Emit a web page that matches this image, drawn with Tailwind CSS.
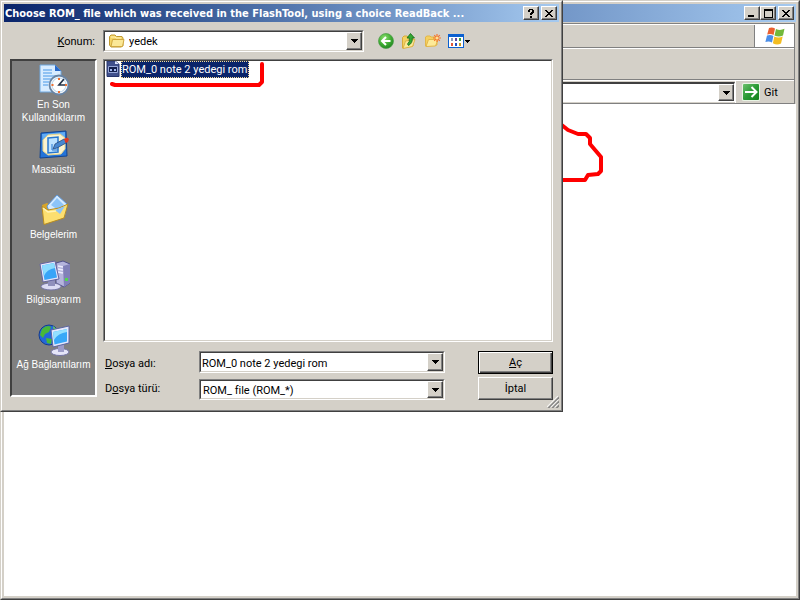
<!DOCTYPE html>
<html lang="tr">
<head>
<meta charset="utf-8">
<title>yedek</title>
<script src="https://cdn.jsdelivr.net/npm/@tailwindcss/browser@4"></script>
</head>
<body class="relative flex min-h-screen bg-[#d4d0c8] font-['Roboto',Tahoma,sans-serif] text-[11px] leading-[13px] text-black">

<!-- Browser window -->
<main class="flex flex-1 border-t border-l border-r border-b border-t-[#d4d0c8] border-l-[#d4d0c8] border-r-[#404040] border-b-[#404040]">
  <div class="flex flex-1 flex-col border border-t-white border-l-white border-r-[#808080] border-b-[#808080] bg-[#d4d0c8] p-[2px]">
    <header class="flex h-[18px] items-center justify-end bg-linear-to-r from-[#0a246a] to-[#a6caf0] pr-[2px]">
      <button aria-label="Simge durumuna küçült" class="flex h-[14px] w-4 items-end border border-t-white border-l-white border-r-[#404040] border-b-[#404040] bg-[#d4d0c8] pb-[2px] pl-[3px] shadow-[inset_-1px_-1px_#808080]"><svg width="6" height="2"><path d="M0 0h6v2H0z"/></svg></button>
      <button aria-label="Ekranı kapla" class="flex h-[14px] w-4 items-center justify-center border border-t-white border-l-white border-r-[#404040] border-b-[#404040] bg-[#d4d0c8] shadow-[inset_-1px_-1px_#808080]"><svg width="9" height="9" shape-rendering="crispEdges"><path d="M0 0h9v9H0zM1 2v6h7V2z" fill-rule="evenodd"/></svg></button>
      <button aria-label="Kapat" class="ml-[2px] flex h-[14px] w-4 items-center justify-center border border-t-white border-l-white border-r-[#404040] border-b-[#404040] bg-[#d4d0c8] shadow-[inset_-1px_-1px_#808080]"><svg width="8" height="7" shape-rendering="crispEdges"><path d="M0 0h2v1h1v1h2V1h1V0h2v1H7v1H6v1H5v1h1v1h1v1h1v1H6V6H5V5H3v1H2v1H0V6h1V5h1V4h1V3H2V2H1V1H0z"/></svg></button>
    </header>
    <div class="mt-px mr-px flex flex-col border-t border-r border-b border-[#808080]">
      <div class="flex h-6 border-t border-b border-t-white border-b-[#808080]">
        <div class="flex-1"></div>
        <div class="flex w-10 items-center justify-center border-l border-[#808080] bg-white">
          <svg width="20" height="18" viewBox="0 0 20 18" aria-hidden="true">
            <path d="M4 1Q7-.5 10 1.6L8.6 8Q5.500 6.200 2.200 7.600z" fill="#ea6030"/>
            <path d="M11 2Q15 4 19.500 1.800L18 8.600Q14 10.600 9.500 8.600z" fill="#72b83a"/>
            <path d="M2 8.600Q5.500 7.200 8.400 9L7 15.600Q4 13.600.4 15z" fill="#4b8ee8"/>
            <path d="M9.300 9.600Q13.500 11.600 17.700 9.600L16 16.400Q12 18.600 7.900 16.200z" fill="#f3bd22"/>
          </svg>
        </div>
      </div>
      <div class="h-8 border-t border-b border-t-white border-b-[#808080]"></div>
      <div class="flex h-[23px] items-center border-t border-white">
        <div class="flex h-5 flex-1 border-t-2 border-r border-b border-t-[#404040] border-r-white border-b-white bg-white">
          <input aria-label="Adres" class="min-w-0 flex-1 bg-white px-1 outline-none">
          <button aria-label="Adres listesi" class="flex w-4 items-center justify-center border border-t-white border-l-white border-r-[#404040] border-b-[#404040] bg-[#d4d0c8] shadow-[inset_-1px_-1px_#808080]"><svg width="7" height="4" shape-rendering="crispEdges"><path d="M0 0h7v1H6v1H5v1H4v1H3V3H2V2H1V1H0z"/></svg></button>
        </div>
        <button class="flex h-full w-[59px] items-center gap-1 border-l border-white pl-[6px]">
          <svg width="18" height="18" viewBox="0 0 18 18" aria-hidden="true"><defs><linearGradient id="go" x2="1" y2="1"><stop stop-color="#6cc06c"/><stop offset=".5" stop-color="#2a9a34"/><stop offset="1" stop-color="#12821c"/></linearGradient></defs><rect width="18" height="18" rx="1.500" fill="#e8f4e4"/><rect x="1" y="1" width="16" height="16" rx="1" fill="url(#go)"/><path d="M3 9h11M9.500 4l5 5-5 5" fill="none" stroke="#fff" stroke-width="2"/></svg>
          Git
        </button>
      </div>
    </div>
    <section class="flex-1 bg-white" aria-label="Sayfa"></section>
  </div>
</main>

<!-- Red pen mark on the page -->
<svg class="pointer-events-none absolute top-[120px] left-[540px]" width="66" height="66" viewBox="540 120 66 66" fill="none" stroke="#f00" stroke-width="4" stroke-linejoin="round" aria-hidden="true"><path d="M550 116L563 126L568 130L578 134H586L590 138V144L601 157V171L598 174L588 175L585 180H550"/></svg>

<!-- File dialog -->
<div role="dialog" aria-labelledby="dlg-title" class="absolute top-0 left-0 w-[563px] max-w-full border border-t-[#d4d0c8] border-l-[#d4d0c8] border-r-[#404040] border-b-[#404040]">
 <div class="border border-t-white border-l-white border-r-[#808080] border-b-[#808080] bg-[#d4d0c8] p-[2px]">
  <header class="flex h-[18px] items-center bg-linear-to-r from-[#0a246a] to-[#a6caf0] pr-[2px] pl-[1px]">
    <h1 id="dlg-title" class="flex-1 font-['DejaVu_Sans_Condensed',Tahoma,sans-serif] font-bold whitespace-nowrap text-white">Choose ROM_ file which was received in the FlashTool, using a choice ReadBack ...</h1>
    <button aria-label="Yardım" class="flex h-[14px] w-4 items-center justify-center border border-t-white border-l-white border-r-[#404040] border-b-[#404040] bg-[#d4d0c8] shadow-[inset_-1px_-1px_#808080]"><svg width="6" height="9" shape-rendering="crispEdges"><path d="M1 0h4v1h1v3H5v1H4v1H2V4h1V3h1V1H2v2H0V1h1zM2 7h2v2H2z"/></svg></button>
    <button aria-label="Kapat" class="ml-[2px] flex h-[14px] w-4 items-center justify-center border border-t-white border-l-white border-r-[#404040] border-b-[#404040] bg-[#d4d0c8] shadow-[inset_-1px_-1px_#808080]"><svg width="8" height="7" shape-rendering="crispEdges"><path d="M0 0h2v1h1v1h2V1h1V0h2v1H7v1H6v1H5v1h1v1h1v1h1v1H6V6H5V5H3v1H2v1H0V6h1V5h1V4h1V3H2V2H1V1H0z"/></svg></button>
  </header>

  <div class="px-[6px] pt-2 pb-2">
    <!-- Location row -->
    <div class="flex items-center">
      <label for="loc" class="w-[93px] pr-2 text-right"><u>K</u>onum:</label>
      <div class="grid h-[22px] w-[261px] border border-t-[#808080] border-l-[#808080] border-r-white border-b-white">
        <select id="loc" class="col-start-1 row-start-1 appearance-none border border-t-[#404040] border-l-[#404040] border-r-[#d4d0c8] border-b-[#d4d0c8] bg-white pl-6 outline-none"><option>yedek</option></select>
        <svg class="pointer-events-none col-start-1 row-start-1 ml-1 self-center" width="17" height="14" viewBox="0 0 17 14" aria-hidden="true"><path d="M1.500 11V2.500L3 1h4l1.500 1.500H14L15 4v7.500L13.500 13H3z" fill="#f5d566" stroke="#c09a30"/><path d="M3 12.500L4.500 5.500H16L14.500 12.500z" fill="#fbe897" stroke="#d0a840"/><path d="M3 3h4l1 1h5" stroke="#fff3b8" fill="none"/></svg>
        <span class="pointer-events-none col-start-1 row-start-1 my-px mr-px flex w-4 items-center justify-center justify-self-end border border-t-white border-l-white border-r-[#404040] border-b-[#404040] bg-[#d4d0c8] shadow-[inset_-1px_-1px_#808080]"><svg width="7" height="4" shape-rendering="crispEdges"><path d="M0 0h7v1H6v1H5v1H4v1H3V3H2V2H1V1H0z"/></svg></span>
      </div>
      <div class="ml-[14px] flex items-center gap-[7px]">
        <button aria-label="Geri"><svg class="block" width="16" height="16" viewBox="0 0 16 16"><defs><radialGradient id="bk" cx=".4" cy=".3" r=".75"><stop stop-color="#8ee070"/><stop offset=".6" stop-color="#3caa30"/><stop offset="1" stop-color="#1e8020"/></radialGradient></defs><circle cx="8" cy="8" r="7.500" fill="url(#bk)" stroke="#4c9c48" stroke-width=".7"/><path d="M12.500 8H4.500M8 4L4 8l4 4" fill="none" stroke="#fff" stroke-width="2"/></svg></button>
        <button aria-label="Bir düzey yukarı"><svg class="block" width="16" height="16" viewBox="0 0 16 16"><path d="M1.500 15V4.500L3 3h3l1 1h5v9z" fill="#f5d060" stroke="#d8aa38"/><path d="M2 15.500L4.500 8L14 6.500L11.500 13.500z" fill="#fdea98" stroke="#dcb448"/><path d="M9.500 .5L13.500 5H11.200Q12 10 7.500 12.500L6.500 11Q9 9 8.300 5H6z" fill="#34a834" stroke="#146c18" stroke-width=".8"/></svg></button>
        <button aria-label="Yeni klasör"><svg class="block" width="17" height="16" viewBox="0 0 17 16"><path d="M1.500 13V4L3 3h3l1 1h6v8z" fill="#f5d060" stroke="#e2b648"/><path d="M2 13.500L4.500 6.500H14L11.500 13z" fill="#fdea98" stroke="#e2b648"/><path d="M13 1v8M9 5h8M10.200 2.200l5.600 5.600M15.800 2.200l-5.600 5.600" stroke="#f47430" stroke-width="1.200"/><circle cx="13" cy="5" r="1.500" fill="#ffdf90"/></svg></button>
        <button aria-label="Görünüm menüsü" class="flex items-center gap-px"><svg width="16" height="16" viewBox="0 0 16 16" shape-rendering="crispEdges"><rect y="1" width="16" height="14" rx="1" fill="#0a60d0"/><path fill="#fff" d="M1 4h14v10H1z"/><path fill="#8898b8" d="M3 5h2v3H3z"/><path fill="#6048a0" d="M7 5h2v3H7z"/><path fill="#38a040" d="M11 5h2v3h-2z"/><path fill="#e05838" d="M3 10h2v3H3z"/><path fill="#2050c0" d="M7 10h2v3H7z"/><path fill="#c89820" d="M11 10h2v3h-2z"/></svg><svg width="5" height="3" shape-rendering="crispEdges"><path d="M0 0h5v1H4v1H3v1H2V2H1V1H0z"/></svg></button>
      </div>
    </div>

    <div class="mt-[7px] flex gap-[6px]">
      <!-- Places bar -->
      <nav class="mb-[3px] flex w-[87px] shrink-0 flex-col border-2 border-t-[#404040] border-l-[#404040] border-r-white border-b-white bg-[#808080] pt-[3px] text-center font-['Liberation_Sans',Arial,sans-serif] text-[10px] text-white">
        <a href="#" class="flex h-[65px] flex-col items-center gap-[2px]">
          <svg width="32" height="32" viewBox="0 0 32 32" class="shrink-0" aria-hidden="true"><path d="M2 1h15l6 6v21H2z" fill="#d8ecff" stroke="#6fa8e0"/><path d="M17 1v6h6z" fill="#2868c8"/><path d="M5 6h9M5 9h9M5 12h14M5 15h8M5 18h6M5 21h5" stroke="#78b4f0" stroke-width="1.500"/><circle cx="21" cy="21" r="9.500" fill="#f4f8fc" stroke="#6884a4" stroke-width="1.800"/><circle cx="21" cy="21" r="7" fill="#fff" stroke="#b8d4ec"/><path d="M26 15l-5 6h6" fill="none" stroke="#24364c" stroke-width="1.700"/><path d="M20 14h2v2h-2zM13.500 20h2v2h-2zM20 27h2v2h-2zM27 20h2v2h-2z" fill="#f07030"/></svg>
          <span>En Son Kullandıklarım</span></a>
        <a href="#" class="flex h-[65px] flex-col items-center gap-[2px]">
          <svg width="32" height="32" viewBox="0 0 32 32" class="shrink-0" aria-hidden="true"><path d="M3 4L28 2L29 27L2 29z" fill="#2474d8" stroke="#124490"/><path d="M4 5L27 3V9Q12 7 5 20z" fill="#62acf4"/><path d="M10 6L22 5L27 9V20L23 25L10 26L5 22L5 11z" fill="#fbf4d0" stroke="#e6d48c"/><path d="M10 9L20 8V23L10 24z" fill="#bce2ff" stroke="#2878d0" stroke-width="1.500"/><path d="M15 20l2-5 9-5 3 2-1 2-9 5z" fill="#4888d0" stroke="#1c3c70" stroke-width=".7"/><path d="M26 10l3-1.500 2 1.500-1 3-2.500 1z" fill="#e03820"/><path d="M14 15v6h6" fill="none" stroke="#2878d0"/></svg>
          <span>Masaüstü</span></a>
        <a href="#" class="flex h-[65px] flex-col items-center gap-[2px]">
          <svg width="32" height="32" viewBox="0 0 32 32" class="shrink-0" aria-hidden="true"><path d="M4 11L9 9l3 2 15 0V23L6 30z" fill="#d8a428"/><path d="M9 12L19 1L29 10L27 21L14 25z" fill="#d4eaff" stroke="#5c98dc"/><path d="M19 4l7 7-6 5-7-5z" fill="#8cc4f8"/><path d="M4 12.500L10 16 21 14 30 10L26 24L6 30.500z" fill="#fcdf70" stroke="#b88c20"/><path d="M17 16l5 4 5-8z" fill="#8cc4f8"/><path d="M5 14l5 4 8-1" fill="none" stroke="#fff4b8" stroke-width="1.500"/></svg>
          <span>Belgelerim</span></a>
        <a href="#" class="flex h-[65px] flex-col items-center gap-[2px]">
          <svg width="32" height="32" viewBox="0 0 32 32" class="shrink-0" aria-hidden="true"><path d="M18 4l7-2 7 3v19l-6 4-8-4z" fill="#b4b4dc" stroke="#50508c"/><path d="M25 7l7-2v19l-6 4z" fill="#8080b8"/><path d="M20 7l5 1M20 10l5 1M20 13l5 1" stroke="#ececff" stroke-width="1.500"/><path d="M27 19h3v3h-3z" fill="#50d850"/><ellipse cx="13" cy="27.500" rx="10" ry="3.500" fill="#dcdcf4" stroke="#7474a4"/><path d="M10 21h7v6h-7z" fill="#9090bc"/><path d="M2 5L17 2L21 20L5 23z" fill="#e4e4fa" stroke="#6464a0"/><path d="M4 6.500L16 4L19 18.500L6.500 21z" fill="#38a4f8"/><path d="M4 6.500L16 4L17 9Q9 10 6 17z" fill="#8cdcff"/></svg>
          <span>Bilgisayarım</span></a>
        <a href="#" class="flex h-[65px] flex-col items-center gap-[2px]">
          <svg width="32" height="32" viewBox="0 0 32 32" class="shrink-0" aria-hidden="true"><circle cx="11" cy="11" r="10" fill="#2468d8" stroke="#143c90"/><path d="M4 5Q9 0 13 3L11 8L7 10L5 14L2 11zM8 14l6 1-1 5-4-1z" fill="#48b838"/><path d="M15 2l5 4-4 2z" fill="#70d050"/><ellipse cx="22" cy="28" rx="9" ry="3.500" fill="#e4e4f8" stroke="#7474a4"/><path d="M20 20h6v8h-6z" fill="#9c9cc8"/><path d="M13 6L31 2V19L15 23z" fill="#e4e8fc" stroke="#5c64a0"/><path d="M15 8L29 5V17.500L16.500 20.500z" fill="#38a8f8"/><path d="M15 8L29 5V8Q20 9 16 16z" fill="#94e0ff"/></svg>
          <span class="whitespace-nowrap">Ağ Bağlantılarım</span></a>
      </nav>

      <div class="min-w-0 flex-1">
        <!-- File list -->
        <div class="border border-t-[#808080] border-l-[#808080] border-r-white border-b-white">
          <ul role="listbox" aria-label="Dosyalar" class="h-[281px] border border-t-[#404040] border-l-[#404040] border-r-[#d4d0c8] border-b-[#d4d0c8] bg-white">
            <li role="option" aria-selected="true" class="flex items-center pl-px">
              <svg width="15" height="17" viewBox="0 0 15 17" aria-hidden="true"><path d="M1 0h8l4 3v12.500H1z" fill="#40508c" stroke="#26346c"/><path d="M9 0l4 3H9z" fill="#dce4fc"/><path d="M2.500 5.500h9v6h-9z" fill="#14204e" stroke="#98a8d8"/><path d="M4 8h2v2H4zM8 8h2v2H8z" fill="#a4b8f0"/></svg>
              <span class="h-[17px] border border-dotted border-[#f5db95] bg-[#0a246a] pr-px leading-[16px] text-white">ROM_0 note 2 yedegi rom</span>
            </li>
          </ul>
        </div>

        <!-- File name and type -->
        <form class="mt-[9px] flex flex-col gap-[3px]" onsubmit="return false">
          <div class="flex h-[23px] items-start">
            <label for="fname" class="w-24 pt-[6px] pl-[2px]"><u>D</u>osya adı:</label>
            <div class="flex h-[22px] min-w-0 flex-1 border border-t-[#808080] border-l-[#808080] border-r-white border-b-white">
              <div class="flex min-w-0 flex-1 border border-t-[#404040] border-l-[#404040] border-r-[#d4d0c8] border-b-[#d4d0c8] bg-white">
                <input id="fname" value="ROM_0 note 2 yedegi rom" class="min-w-0 flex-1 pt-[2px] pl-px outline-none">
                <button type="button" aria-label="Dosya adı listesi" class="flex w-4 items-center justify-center border border-t-white border-l-white border-r-[#404040] border-b-[#404040] bg-[#d4d0c8] shadow-[inset_-1px_-1px_#808080]"><svg width="7" height="4" shape-rendering="crispEdges"><path d="M0 0h7v1H6v1H5v1H4v1H3V3H2V2H1V1H0z"/></svg></button>
              </div>
            </div>
            <button type="submit" class="ml-[33px] h-[23px] w-[75px] border border-black bg-[#d4d0c8] shadow-[inset_1px_1px_#fff,inset_-1px_-1px_#404040,inset_-2px_-2px_#808080]"><u>A</u>ç</button>
          </div>
          <div class="flex h-[23px] items-end">
            <label for="ftype" class="w-24 self-center pl-[2px]">D<u>o</u>sya türü:</label>
            <div class="grid h-[21px] min-w-0 flex-1 border border-t-[#808080] border-l-[#808080] border-r-white border-b-white">
              <select id="ftype" class="col-start-1 row-start-1 appearance-none border border-t-[#404040] border-l-[#404040] border-r-[#d4d0c8] border-b-[#d4d0c8] bg-white pt-px pl-[2px] outline-none"><option>ROM_ file (ROM_*)</option></select>
              <span class="pointer-events-none col-start-1 row-start-1 my-px mr-px flex w-4 items-center justify-center justify-self-end border border-t-white border-l-white border-r-[#404040] border-b-[#404040] bg-[#d4d0c8] shadow-[inset_-1px_-1px_#808080]"><svg width="7" height="4" shape-rendering="crispEdges"><path d="M0 0h7v1H6v1H5v1H4v1H3V3H2V2H1V1H0z"/></svg></span>
            </div>
            <button type="button" class="ml-[33px] h-[23px] w-[75px] border border-t-white border-l-white border-r-[#404040] border-b-[#404040] bg-[#d4d0c8] shadow-[inset_-1px_-1px_#808080]">İptal</button>
          </div>
        </form>
      </div>
    </div>
  </div>
 </div>
 <svg class="absolute right-[3px] bottom-[3px]" width="12" height="12" viewBox="0 0 12 12" stroke-width="1.500" aria-hidden="true"><path d="M0 12L12 0M4 12l8-8M8 12l4-4" stroke="#808080" transform="translate(.8 .8)"/><path d="M0 12L12 0M4 12l8-8M8 12l4-4" stroke="#fff" stroke-width="1" transform="translate(-.6 -.6)"/></svg>
 <!-- Red pen mark under the selected file -->
 <svg class="pointer-events-none absolute top-[59px] left-[107px]" width="160" height="32" viewBox="108 60 160 32" fill="none" stroke="#f00" stroke-width="4" stroke-linecap="round" stroke-linejoin="round" aria-hidden="true"><path d="M112 84l3 1H259L262 82V64"/></svg>
</div>
</body>
</html>
